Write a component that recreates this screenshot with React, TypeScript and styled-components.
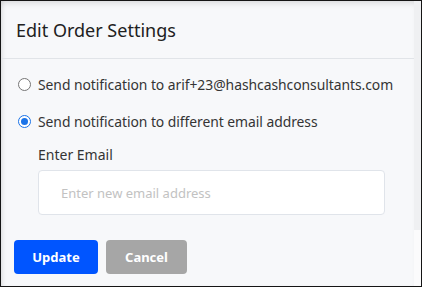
import { createGlobalStyle } from "styled-components";
import styled from "styled-components";

const GlobalStyle = createGlobalStyle`
  html, body {
    margin: 0;
    padding: 0;
    background: #ffffff;
  }
  body {
    font-family: "Noto Sans", "Open Sans", Arial, sans-serif;
  }
`;

const Frame = styled.div`
  width: 422px;
  height: 287px;
  box-sizing: border-box;
  border: 1px solid #151515;
  display: flex;
  background: #f7f8fa;
  overflow: hidden;
`;

const Panel = styled.div`
  flex: 1;
  display: flex;
  flex-direction: column;
  box-shadow: inset 0 6px 6px -4px rgba(0, 0, 0, 0.12),
    inset 4px 0 5px -3px rgba(0, 0, 0, 0.12);
`;

const Scrollbar = styled.div`
  width: 7px;
  display: flex;
  flex-direction: column;
  background: #fbfbfc;
`;

const Thumb = styled.div`
  height: 229px;
  background: #eff0f2;
`;

const Header = styled.header`
  height: 57px;
  display: flex;
  align-items: center;
  padding-left: 15px;
  border-bottom: 1px solid #e1e4e8;
`;

const Title = styled.h1`
  margin: 0;
  font-size: 18px;
  font-weight: 400;
  color: #212121;
`;

const Body = styled.div`
  padding: 15px 0 0 17px;
  display: flex;
  flex-direction: column;
`;

const Option = styled.label`
  display: flex;
  align-items: center;
  height: 20px;
  font-size: 13.9px;
  letter-spacing: -0.05px;
  color: #343434;
  margin-bottom: 17px;
  cursor: pointer;
`;

const Radio = styled.span<{ $checked?: boolean }>`
  width: 13px;
  height: 13px;
  box-sizing: border-box;
  border-radius: 50%;
  border: 1px solid ${(p) => (p.$checked ? "#1a73e8" : "#767676")};
  background: #fff;
  margin-right: 7px;
  display: flex;
  align-items: center;
  justify-content: center;
  &::after {
    content: "";
    display: ${(p) => (p.$checked ? "block" : "none")};
    width: 7px;
    height: 7px;
    border-radius: 50%;
    background: #1a73e8;
  }
`;

const Field = styled.div`
  padding-left: 20px;
  display: flex;
  flex-direction: column;
`;

const Label = styled.div`
  font-size: 14px;
  line-height: 20px;
  color: #343434;
  margin-top: -3px;
  margin-bottom: 5px;
`;

const Input = styled.input`
  width: 347px;
  height: 45px;
  box-sizing: border-box;
  border: 1px solid #e0e4ea;
  border-radius: 4px;
  background: #fff;
  padding: 0 0 0 22px;
  font-family: inherit;
  font-size: 13px;
  color: #333;
  outline: none;
  &::placeholder {
    color: #c2c2c2;
  }
`;

const Actions = styled.div`
  display: flex;
  gap: 8px;
  margin: 25px 0 0 -4px;
`;

const Button = styled.button<{ $variant?: "primary" | "muted" }>`
  height: 34px;
  padding: 0;
  width: ${(p) => (p.$variant === "muted" ? "81px" : "84px")};
  border: none;
  border-radius: 4px;
  background: ${(p) => (p.$variant === "muted" ? "#a6a6a6" : "#0055ff")};
  color: #fff;
  font-family: inherit;
  font-size: 13px;
  font-weight: 700;
  cursor: pointer;
`;

export default function App() {
  return (
    <>
      <GlobalStyle />
      <Frame>
        <Panel>
          <Header>
            <Title>Edit Order Settings</Title>
          </Header>
          <Body>
            <Option>
              <Radio />
              Send notification to arif+23@hashcashconsultants.com
            </Option>
            <Option>
              <Radio $checked />
              Send notification to different email address
            </Option>
            <Field>
              <Label>Enter Email</Label>
              <Input placeholder="Enter new email address" />
            </Field>
            <Actions>
              <Button $variant="primary">Update</Button>
              <Button $variant="muted">Cancel</Button>
            </Actions>
          </Body>
        </Panel>
        <Scrollbar>
          <Thumb />
        </Scrollbar>
      </Frame>
    </>
  );
}
